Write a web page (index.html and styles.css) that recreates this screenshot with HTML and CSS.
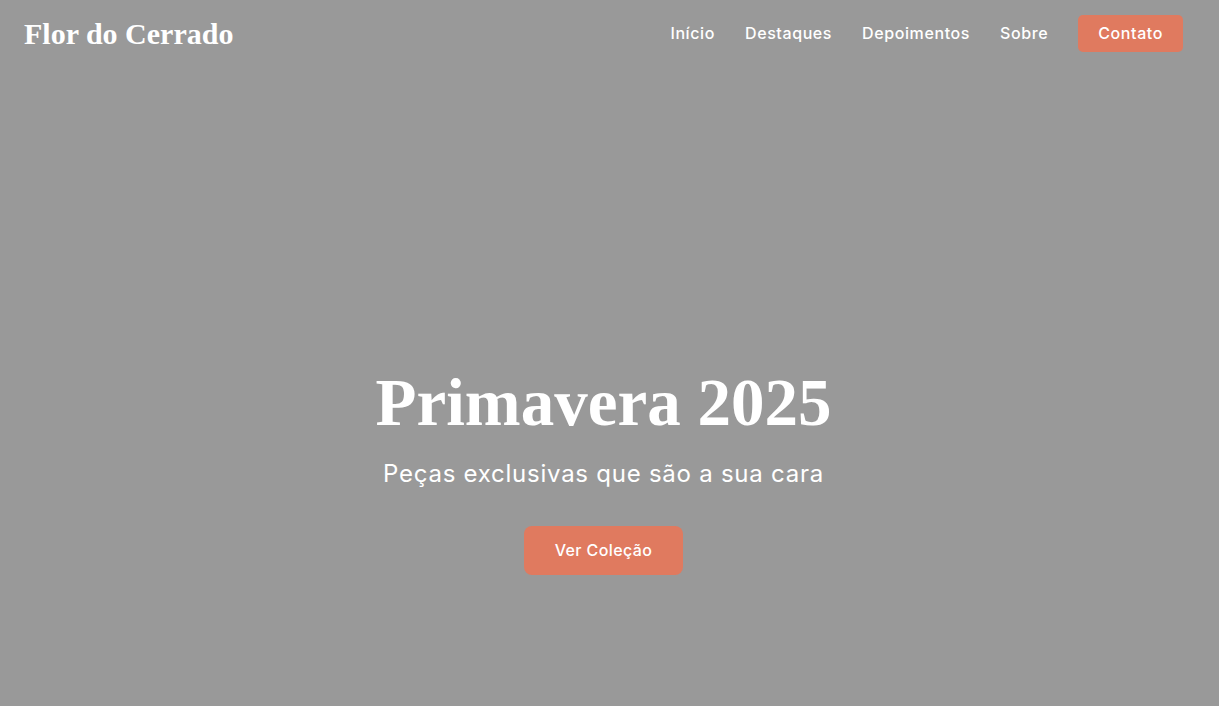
FILE: index.html
```html
<!DOCTYPE html>
<html lang="pt-BR">
<head>
<meta charset="utf-8">
<title>Flor do Cerrado</title>
<link rel="stylesheet" href="styles.css">
</head>
<body>
<div class="page">
  <header class="header">
    <a class="logo" href="#">Flor do Cerrado</a>
    <nav class="nav">
      <a href="#">Início</a>
      <a href="#">Destaques</a>
      <a href="#">Depoimentos</a>
      <a href="#">Sobre</a>
      <a class="btn btn-small" href="#">Contato</a>
    </nav>
  </header>
  <main class="hero">
    <h1 class="hero-title">Primavera 2025</h1>
    <p class="hero-sub">Peças exclusivas que são a sua cara</p>
    <a class="btn btn-large" href="#">Ver Coleção</a>
  </main>
</div>
</body>
</html>
```
FILE: styles.css
```css
* { box-sizing: border-box; }
html, body {
  margin: 0;
  padding: 0;
  height: 100%;
  background: #999999;
  overflow: hidden;
}
body {
  font-family: "Inter", "Open Sans", sans-serif;
  color: #ffffff;
}
a { color: #ffffff; text-decoration: none; }
.page {
  width: calc(100% - 12px);
  height: 100%;
}
.header {
  height: 66px;
  padding: 0 24px;
  display: flex;
  align-items: center;
  justify-content: space-between;
}
.logo {
  font-family: "Liberation Serif", serif;
  font-weight: 700;
  font-size: 30px;
  margin-top: 2px;
}
.nav {
  display: flex;
  align-items: center;
  gap: 30px;
  font-size: 16px;
  font-weight: 500;
  letter-spacing: 0.6px;
}
.btn {
  background: #e07a5f;
  color: #ffffff;
  font-weight: 500;
  display: inline-flex;
  align-items: center;
  justify-content: center;
}
.btn-small {
  height: 37px;
  padding: 0 20px;
  border-radius: 5px;
}
.hero {
  display: flex;
  flex-direction: column;
  align-items: center;
  padding-top: 300px;
}
.hero-title {
  margin: 0;
  font-family: "Liberation Serif", serif;
  font-weight: 700;
  font-size: 67px;
  line-height: 1.1;
}
.hero-sub {
  margin: 16px 0 0;
  font-size: 24px;
  line-height: 1.5;
  font-weight: 400;
  letter-spacing: 0.75px;
}
.btn-large {
  margin-top: 34px;
  width: 159px;
  height: 49px;
  border-radius: 8px;
  font-size: 16px;
  letter-spacing: 0.4px;
}
```
